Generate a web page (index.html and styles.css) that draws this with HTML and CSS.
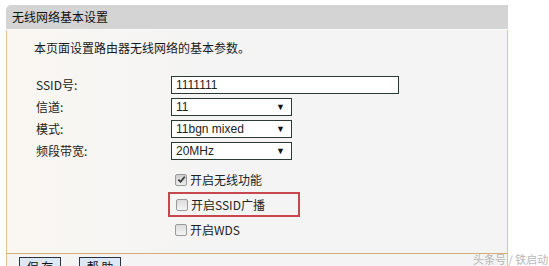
FILE: index.html
```html
<!DOCTYPE html>
<html>
<head>
<meta charset="utf-8">
<link rel="stylesheet" href="styles.css">
</head>
<body>
<div class="page">
  <div class="panel">
    <div class="panel-head">无线网络基本设置</div>
    <div class="panel-body">
      <p class="intro">本页面设置路由器无线网络的基本参数。</p>
      <div class="form">
        <div class="label">SSID号:</div>
        <div class="field"><div class="input">1111111</div></div>
        <div class="label">信道:</div>
        <div class="field"><div class="select">11<span class="arrow">▼</span></div></div>
        <div class="label">模式:</div>
        <div class="field"><div class="select">11bgn mixed<span class="arrow">▼</span></div></div>
        <div class="label">频段带宽:</div>
        <div class="field"><div class="select">20MHz<span class="arrow">▼</span></div></div>
      </div>
      <div class="checks">
        <div class="check-row"><span class="box checked"><svg viewBox="0 0 10 10" width="9" height="9"><path d="M1.5 5.2 L4 7.6 L8.6 2" fill="none" stroke="#333" stroke-width="1.8"/></svg></span>开启无线功能</div>
        <div class="check-row highlight"><span class="box"></span>开启SSID广播</div>
        <div class="check-row"><span class="box"></span>开启WDS</div>
      </div>
    </div>
    <div class="panel-foot">
      <div class="btn">保 存</div>
      <div class="btn">帮 助</div>
    </div>
  </div>
  <div class="watermark">头条号 / 铁启动</div>
</div>
</body>
</html>
```
FILE: styles.css
```css
* { box-sizing: border-box; }
html, body { margin: 0; padding: 0; background: #fff; }
body {
  width: 549px;
  height: 266px;
  overflow: hidden;
  font-family: "Noto Sans CJK SC", "DejaVu Sans", sans-serif;
  font-size: 12px;
  color: #1a1a1a;
}
.page {
  position: relative;
  padding-top: 5px;
  height: 266px;
}
.panel {
  margin-left: 6px;
  width: 502px;
}
.panel-head {
  height: 25px;
  line-height: 24px;
  background: #d4d4d4;
  border-top-left-radius: 5px;
  border-bottom: 1px solid #fafafa;
  padding-left: 6px;
  font-size: 12px;
  color: #111;
}
.panel-body {
  background: linear-gradient(to right, #faf7f2, #f4f4f4 40%);
  border-left: 1px solid #e2c48e;
  border-right: 1px solid #e2c48e;
  border-bottom: 1px solid #d5ae70;
  height: 224px;
  padding-top: 10px;
}
.intro {
  margin: 0 0 0 27px;
  line-height: 16px;
  height: 16px;
}
.form {
  margin-top: 20px;
  margin-left: 29px;
  display: grid;
  grid-template-columns: 135px auto;
  grid-auto-rows: 22px;
}
.label {
  line-height: 18px;
  color: #222;
}
.field { display: flex; }
.input, .select {
  height: 18px;
  border: 1px solid #2a3a33;
  background: #fff;
  font-family: "Liberation Sans", Arial, sans-serif;
  font-size: 12px;
  line-height: 16px;
  padding-left: 4px;
  color: #222;
}
.input { width: 228px; }
.select {
  width: 121px;
  display: flex;
  justify-content: space-between;
  padding-right: 6px;
}
.arrow {
  font-size: 9px;
  color: #111;
  line-height: 16px;
}
.checks {
  margin-top: 3px;
  margin-left: 161px;
  width: 132px;
}
.check-row {
  height: 25px;
  display: flex;
  align-items: center;
  padding-left: 7px;
  gap: 3px;
  color: #222;
}
.check-row.highlight {
  border: 2px solid #c8464d;
  padding-left: 6px;
}
.box {
  width: 12px;
  height: 12px;
  border: 1px solid #9a9a9a;
  border-radius: 2px;
  background: linear-gradient(#dcdcdc, #f4f4f4);
  display: flex;
  align-items: center;
  justify-content: center;
}
.box.checked { background: linear-gradient(#cfcfcf, #ececec); }
.panel-foot {
  background: #f4f4f4;
  border-left: 1px solid #e2c48e;
  border-right: 1px solid #e2c48e;
  height: 13px;
  display: flex;
  gap: 18px;
  padding-left: 12px;
  padding-top: 3px;
  overflow: visible;
}
.btn {
  height: 20px;
  width: 42px;
  border: 1px solid #2b3340;
  background: #dde8f6;
  text-align: center;
  line-height: 18px;
  font-size: 12px;
  color: #111;
  flex: none;
}
.watermark {
  position: absolute;
  left: 473px;
  top: 251px;
  font-size: 11px;
  color: #b8b8b8;
  letter-spacing: 0px;
}
```
